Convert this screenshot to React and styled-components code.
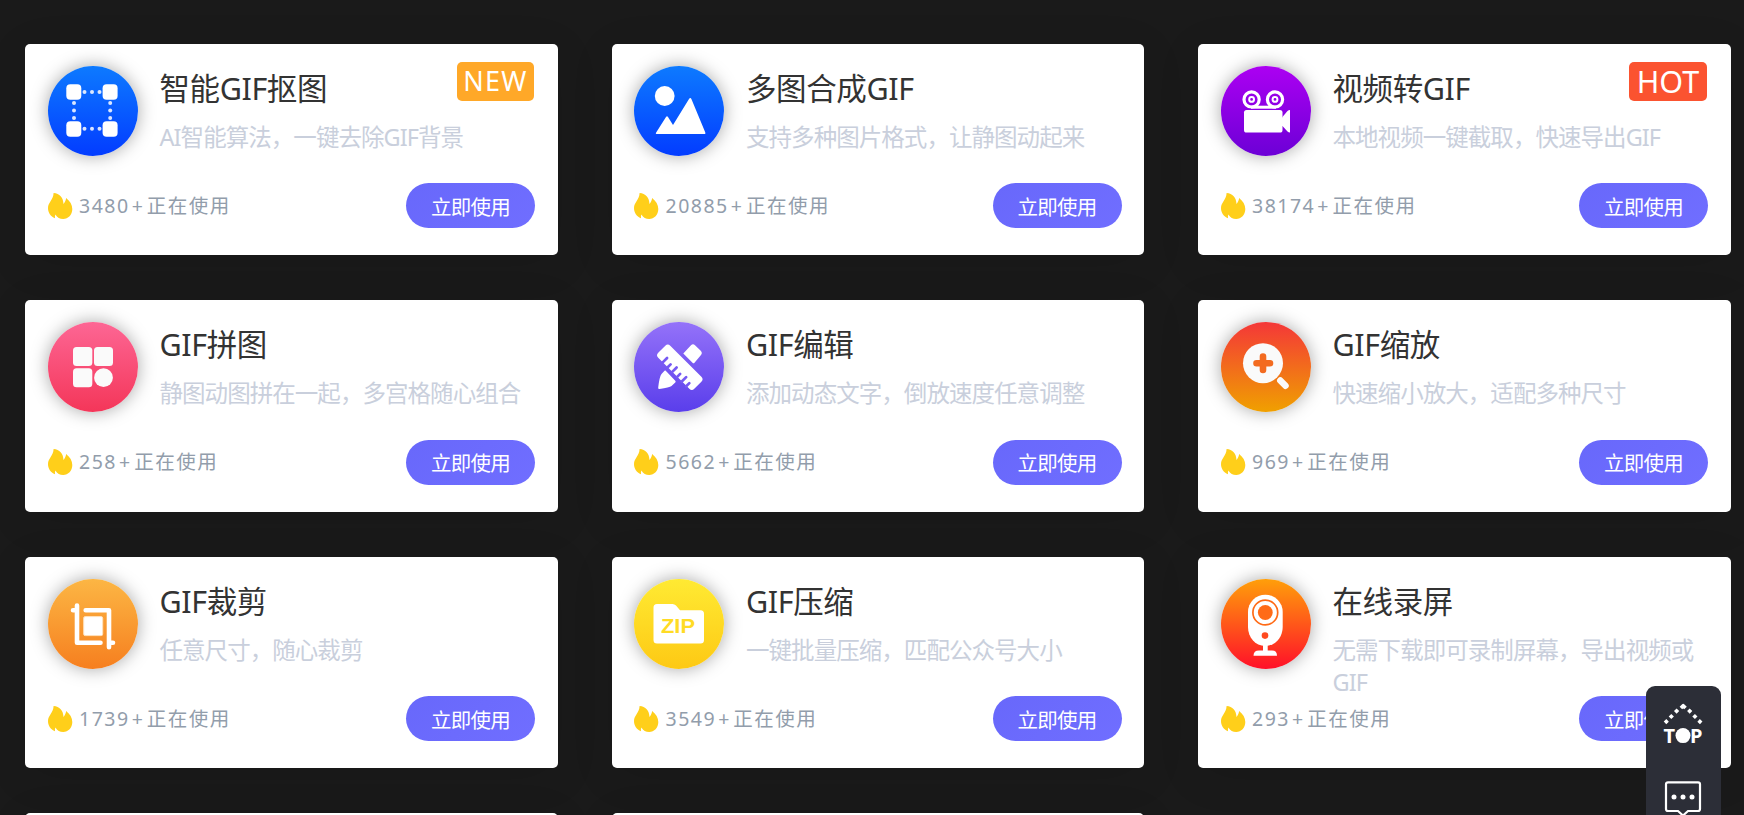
import React from "react";
import styled, {createGlobalStyle} from "styled-components";

const GlobalStyle = createGlobalStyle`
  html,
  body {
    margin: 0;
    height: 815px;
    overflow: hidden;
    background: #1a1a1a;
  }

  body {
    font-family: "Noto Sans", "Noto Sans CJK SC", sans-serif;
  }
`;

const Page = styled.main`
  height: 815px;
  padding: 43.6px 0 0 25px;
  box-sizing: border-box;
  overflow: hidden;
`;

const Grid = styled.div`
  display: grid;
  grid-template-columns: repeat(3, 532.5px);
  grid-auto-rows: 211.5px;
  gap: 45px 54px;
`;

const Card = styled.section`
  position: relative;
  display: flex;
  flex-direction: column;
  justify-content: space-between;
  padding: 22.4px 22.5px 27px;
  box-sizing: border-box;
  border-radius: 5px;
  background: #fff;
  box-shadow: 0 8px 45px rgba(0, 0, 0, 0.09);
`;

const Header = styled.div`
  display: flex;
  gap: 22px;
  height: 90px;
`;

const IconCircle = styled.div`
  flex: none;
  width: 90px;
  height: 90px;
  border-radius: 50%;
  background: linear-gradient(${props => props.$from}, ${props => props.$to});
  box-shadow: 0 0 18px rgba(0, 0, 0, 0.35);

  svg {
    display: block;
  }
`;

const Info = styled.div`
  flex: 1;
  margin-right: -10px;
`;

const Title = styled.h3`
  margin: 0;
  color: #333;
  font-size: 30.5px;
  font-weight: 400;
  line-height: 44px;
  letter-spacing: -0.4px;
`;

const Desc = styled.p`
  width: 370px;
  margin: 11px 0 0;
  color: #c9cfdc;
  font-size: 23.5px;
  line-height: 32px;
  letter-spacing: -0.95px;
`;

const Badge = styled.span`
  position: absolute;
  top: 18px;
  right: 23.5px;
  width: ${props => props.$width};
  height: 39px;
  border-radius: 5px;
  background: ${props => props.$color};
  color: #fff;
  font-size: ${props => props.$size};
  line-height: 38px;
  letter-spacing: ${props => props.$spacing};
  text-align: center;
`;

const Footer = styled.div`
  display: flex;
  align-items: center;
  justify-content: space-between;
  height: 45px;
`;

const Count = styled.div`
  display: flex;
  align-items: center;
  color: #929dab;
  font-size: 19.5px;
  line-height: 26px;
  letter-spacing: 1.5px;

  svg {
    margin-right: 6.5px;
  }
`;

const Plus = styled.span`
  margin: 0 2.5px 0 2px;
`;

const Button = styled.button`
  width: 129px;
  height: 45px;
  padding: 0;
  border: none;
  border-radius: 23px;
  background: linear-gradient(135deg, #6868fb, #706eff);
  color: #fff;
  font-family: inherit;
  font-size: 20.5px;
  letter-spacing: -0.8px;
  cursor: pointer;
`;

const SideBar = styled.aside`
  position: fixed;
  top: 686px;
  right: 23px;
  display: flex;
  flex-direction: column;
  align-items: center;
  gap: 34px;
  width: 75px;
  height: 220px;
  padding: 17px 1px 0 0;
  box-sizing: border-box;
  border-radius: 9px;
  background: #2c2e37;

  svg {
    flex: none;
    overflow: visible;
  }
`;

const Flame = () => (
  <svg width="25" height="26" viewBox="0 0 25 26">
    <path
      d="M5.6 0C11.500 .3 15.300 4.600 15.500 11C16.800 9.300 17.900 7.300 18.100 4.900C22 8 24.300 11.500 24.300 16C24.300 21.800 20.200 26 15.200 26C11.800 26 9.200 24.500 7.400 21.400C6.900 22.700 6.800 23.800 7 25.200C2.600 23.400 0 19.600 0 15C0 9.500 5.300 7 5.600 0Z"
      fill="#ffcf1a"
    />
  </svg>
);

const CutoutIcon = () => (
  <svg width="90" height="90" fill="#fff">
    <rect x="18.300" y="18.300" width="15" height="15.500" rx="4" />
    <rect x="54.600" y="18.300" width="15" height="15.500" rx="4" />
    <rect x="18.300" y="55.200" width="15" height="15.500" rx="4" />
    <rect x="54.600" y="55.200" width="15" height="15.500" rx="4" />
    <g opacity=".85">
      {[36.5, 44, 51.5].map(n => (
        <React.Fragment key={n}>
          <circle cx={n} cy="26" r="2" />
          <circle cx={n} cy="62.700" r="2" />
          <circle cx="26" cy={n + 0.5} r="2" />
          <circle cx="62.200" cy={n + 0.5} r="2" />
        </React.Fragment>
      ))}
    </g>
  </svg>
);

const PictureIcon = () => (
  <svg width="90" height="90" fill="#fff">
    <circle cx="30.700" cy="30" r="9.900" />
    <path d="M22.500 68Q21.300 68 22 66.700L32 51Q33 49.500 34 51L39 59L55 33Q56.400 30.700 57.500 33.200L71.300 66.500Q71.900 68 70.500 68Z" />
  </svg>
);

const CameraIcon = () => (
  <svg width="90" height="90" fill="#fff">
    <g fill="none" stroke="#fff">
      <circle cx="30.600" cy="33.400" r="7.600" strokeWidth="3.200" />
      <circle cx="54" cy="33.400" r="7.600" strokeWidth="3.200" />
      <circle cx="30.600" cy="33.400" r="2.400" strokeWidth="2" />
      <circle cx="54" cy="33.400" r="2.400" strokeWidth="2" />
      <path d="M30 41.200H55" strokeWidth="3" />
    </g>
    <rect x="23" y="44" width="38.500" height="22.500" rx="2.600" />
    <path d="M61 51.500L66.500 45Q67.500 44 69 44V66.500Q67.500 66.500 66.500 65.500L61 59.500Z" />
  </svg>
);

const PuzzleIcon = () => (
  <svg width="90" height="90" fill="#fafafa">
    <rect x="25" y="25" width="19.300" height="19" rx="3.500" />
    <rect x="46" y="25" width="19" height="19" rx="3.500" />
    <rect x="25" y="46.200" width="19.300" height="19" rx="3.500" />
    <circle cx="55.500" cy="55.700" r="9.400" />
  </svg>
);

const EditIcon = () => (
  <svg width="90" height="90" fill="#fff">
    <g transform="translate(45.800 45.200) rotate(45)">
      <rect x="-25.500" y="-8.500" width="51" height="17" rx="3.500" />
      <path
        d="M-15.500 9V2.500M-8.500 9V4.500M-2 9V2.500M5 9V4.500M11.500 9V2.500M18 9V4.500"
        stroke="#7659f3"
        strokeWidth="2.700"
        strokeLinecap="round"
      />
    </g>
    <path d="M49.300 31.500L57 23.300Q59 21.300 61 23.300L67 29Q68.700 31 67.200 32.800L60.500 40.700Q59.500 41.700 58.500 40.700Z" />
    <path d="M31.500 48.500L41.500 59Q42 60 41 60.700L37.500 64Q35.500 65.500 25.500 67Q24 67.200 24.200 65.500Q25.500 54.500 27.500 52L30.500 48.800Q31 48.200 31.500 48.500Z" />
  </svg>
);

const ZoomIcon = () => (
  <svg width="90" height="90">
    <circle cx="42" cy="41.200" r="20" fill="#fafafa" />
    <path d="M35.500 41.200H49M42 34.500V48" stroke="#f36b20" strokeWidth="6.600" strokeLinecap="round" />
    <path d="M59.300 58.500L64.500 63.800" stroke="#fafafa" strokeWidth="6.500" strokeLinecap="round" />
  </svg>
);

const CropIcon = () => (
  <svg width="90" height="90">
    <path
      d="M25 31.200H29M29 26.500V63.700H52.500M37.700 31.200H61V68.300M61 63.700H65"
      fill="none"
      stroke="#fff"
      strokeWidth="4.600"
      strokeLinecap="round"
      strokeLinejoin="round"
    />
    <rect x="35.700" y="37.600" width="19" height="19" rx="1.500" fill="#fff" stroke="#ffe2bd" />
  </svg>
);

const ZipIcon = () => (
  <svg width="90" height="90">
    <path
      d="M23 25H38.500Q40.500 25 42 26.500L46 31.200H66.500Q70 31.200 70 34.700V61Q70 64.500 66.500 64.500H23Q19.500 64.500 19.500 61V28.500Q19.500 25 23 25Z"
      fill="#fff"
    />
    <text
      x="27"
      y="54"
      fill="#ffdb25"
      fontFamily="Liberation Sans, sans-serif"
      fontSize="19.500"
      fontWeight="700"
      textLength="34"
      lengthAdjust="spacingAndGlyphs"
    >
      ZIP
    </text>
  </svg>
);

const WebcamIcon = () => (
  <svg width="90" height="90" fill="#fff">
    <path d="M27 33A17.300 17.300 0 0 1 61.700 33V48C61.700 58 54.500 67 44.300 67S27 58 27 48Z" />
    <circle cx="44.300" cy="33.500" r="12.400" fill="none" stroke="#ff6a15" strokeWidth="1.700" />
    <circle cx="44.300" cy="33.500" r="7.400" fill="#ff6b17" />
    <circle cx="44" cy="56.600" r="3.300" fill="#ff4a20" />
    <path d="M42 66H46.700V71.500H51Q56 71.500 56 76.800H32.500Q32.500 71.500 38 71.500H42Z" />
  </svg>
);

const TopIcon = () => (
  <svg width="40" height="43" fill="#fff">
    <path
      d="M2 19.800L4.600 17.400M7 14.800L9.600 12.200M12.300 9.400L14.900 6.800M17.900 5L20.200 2.800L22.500 5M25.400 6.800L28 9.400M30.600 12.200L33.200 14.800M35.600 17.400L38.200 19.800"
      fill="none"
      stroke="#fff"
      strokeWidth="3.700"
      strokeLinejoin="round"
    />
    <text x="0.500" y="40" fontSize="20" fontWeight="700">
      T
    </text>
    <circle cx="20" cy="32.600" r="7.500" />
    <text x="27" y="40" fontSize="20" fontWeight="700">
      P
    </text>
  </svg>
);

const ChatIcon = () => (
  <svg width="38" height="38" fill="none" stroke="#fff" strokeWidth="2.200">
    <path d="M4 2.300H34Q36 2.300 36 4.300V29Q36 31 34 31H24L19 35.500L14 31H4Q2 31 2 29V4.300Q2 2.300 4 2.300Z" />
    <g fill="#fff" stroke="none">
      <circle cx="10" cy="17" r="2.500" />
      <circle cx="19" cy="17" r="2.500" />
      <circle cx="28" cy="17" r="2.500" />
    </g>
  </svg>
);

const newBadge = {text: "NEW", color: "#ffa828", size: "27px", width: "77px", spacing: "1.3px"};
const hotBadge = {text: "HOT", color: "#fb5330", size: "30.5px", width: "78px", spacing: "0"};

const tools = [
  {title: "智能GIF抠图", desc: "AI智能算法，一键去除GIF背景", count: 3480, icon: CutoutIcon, from: "#0d7aff", to: "#033cff", badge: newBadge},
  {title: "多图合成GIF", desc: "支持多种图片格式，让静图动起来", count: 20885, icon: PictureIcon, from: "#0d7aff", to: "#033cff"},
  {title: "视频转GIF", desc: "本地视频一键截取，快速导出GIF", count: 38174, icon: CameraIcon, from: "#ac00f2", to: "#6c00d6", badge: hotBadge},
  {title: "GIF拼图", desc: "静图动图拼在一起，多宫格随心组合", count: 258, icon: PuzzleIcon, from: "#fd6694", to: "#f43659"},
  {title: "GIF编辑", desc: "添加动态文字，倒放速度任意调整", count: 5662, icon: EditIcon, from: "#9472f9", to: "#5a3eeb"},
  {title: "GIF缩放", desc: "快速缩小放大，适配多种尺寸", count: 969, icon: ZoomIcon, from: "#f43738", to: "#f0a000"},
  {title: "GIF裁剪", desc: "任意尺寸，随心裁剪", count: 1739, icon: CropIcon, from: "#fcb644", to: "#f67f1f"},
  {title: "GIF压缩", desc: "一键批量压缩，匹配公众号大小", count: 3549, icon: ZipIcon, from: "#ffea33", to: "#fdc914"},
  {title: "在线录屏", desc: "无需下载即可录制屏幕，导出视频或GIF", count: 293, icon: WebcamIcon, from: "#ff9f0a", to: "#ff1029"},
];

const ToolCard = ({tool}) => {
  const {icon: Icon, badge} = tool;

  return (
    <Card>
      <Header>
        <IconCircle $from={tool.from} $to={tool.to}>
          <Icon />
        </IconCircle>
        <Info>
          <Title>{tool.title}</Title>
          <Desc>{tool.desc}</Desc>
        </Info>
      </Header>
      {badge && (
        <Badge $color={badge.color} $size={badge.size} $width={badge.width} $spacing={badge.spacing}>
          {badge.text}
        </Badge>
      )}
      <Footer>
        <Count>
          <Flame />
          <span>
            {tool.count}
            <Plus>+</Plus>
            正在使用
          </span>
        </Count>
        <Button type="button">立即使用</Button>
      </Footer>
    </Card>
  );
};

const App = () => (
  <>
    <GlobalStyle />
    <Page>
      <Grid>
        {tools.map(tool => (
          <ToolCard key={tool.title} tool={tool} />
        ))}
        <Card />
        <Card />
      </Grid>
    </Page>
    <SideBar>
      <TopIcon />
      <ChatIcon />
    </SideBar>
  </>
);

export default App;
